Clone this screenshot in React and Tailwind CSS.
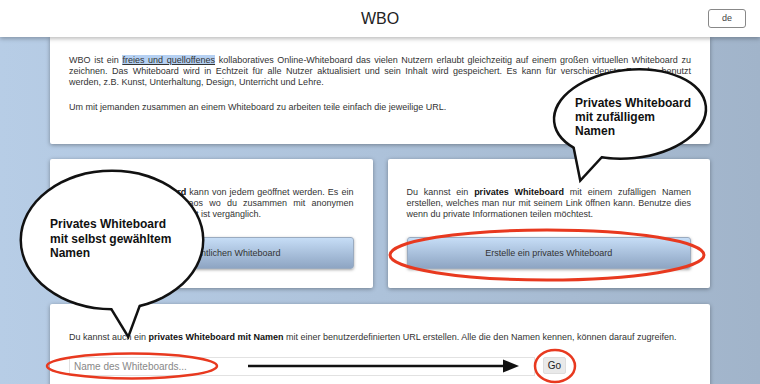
import React from "react";

const line = "block text-justify [text-align-last:justify]";

export default function App() {
  return (
    <div className="relative h-[384px] w-[760px] overflow-hidden bg-gradient-to-r from-[#b7cde6] via-[#adc2da] to-[#a1b4ca] font-['Liberation_Sans',Arial,sans-serif] text-[#333]">
      <header className="relative z-10 grid h-[37px] grid-cols-[1fr_auto_1fr] items-center bg-white shadow-[0_2px_4px_rgba(0,0,0,0.25)]">
        <div />
        <h1 className="text-[16px] leading-none text-[#222]">WBO</h1>
        <div className="flex justify-end pr-[14px]">
          <button className="h-[19px] w-[38px] rounded-[3px] border border-[#888] bg-white text-[9px] text-[#444]">
            de
          </button>
        </div>
      </header>

      <main className="px-[50px] text-[9px] leading-[11px]">
        <section className="h-[107px] rounded-b-[2px] bg-white px-[19px] pt-[18px] shadow-[0_1px_4px_rgba(0,0,0,0.35)]">
          <p>
            <span className={line}>
              WBO ist ein{" "}
              <a className="bg-[#b5d0f2] underline">freies und quelloffenes</a>{" "}
              kollaboratives Online-Whiteboard das vielen Nutzern erlaubt gleichzeitig auf einem großen virtuellen Whiteboard zu
            </span>
            <span className={line}>
              zeichnen. Das Whiteboard wird in Echtzeit für alle Nutzer aktualisiert und sein Inhalt wird gespeichert. Es kann für verschiedenste Zwecke benutzt
            </span>
            <span className="block">werden, z.B. Kunst, Unterhaltung, Design, Unterricht und Lehre.</span>
          </p>
          <p className="mt-[14px]">
            Um mit jemanden zusammen an einem Whiteboard zu arbeiten teile einfach die jeweilige URL.
          </p>
        </section>

        <div className="mt-[15px] grid grid-cols-2 gap-[15px]">
          <Card
            button="Gehe zum öffentlichen Whiteboard"
            lines={[
              <>
                Das <b className="text-[#111]">öffentliche Whiteboard</b> kann von jedem geöffnet werden. Es ein
              </>,
              <>fröhliches und kreatives Chaos wo du zusammen mit anonymen</>,
              <>Nutzern malen kannst. Alles dort ist vergänglich.</>,
            ]}
          />
          <Card
            button="Erstelle ein privates Whiteboard"
            lines={[
              <>
                Du kannst ein <b className="text-[#111]">privates Whiteboard</b> mit einem zufälligen Namen
              </>,
              <>erstellen, welches man nur mit seinem Link öffnen kann. Benutze dies</>,
              <>wenn du private Informationen teilen möchtest.</>,
            ]}
          />
        </div>

        <section className="mt-[16px] h-[100px] rounded-[2px] bg-white px-[19px] pt-[28px] shadow-[0_1px_4px_rgba(0,0,0,0.35)]">
          <p>
            Du kannst auch ein <b className="text-[#111]">privates Whiteboard mit Namen</b> mit einer benutzerdefinierten URL erstellen. Alle die den Namen kennen, können darauf zugreifen.
          </p>
          <div className="mt-[14px] flex items-start gap-[8px]">
            <input
              placeholder="Name des Whiteboards..."
              className="h-[19px] w-[466px] border border-[#e2e2e2] px-[4px] text-[10px] placeholder:text-[#888]"
            />
            <button className="h-[17px] w-[23px] rounded-[2px] border border-[#ddd] bg-[#e9e9e9] text-[10px] text-[#222]">
              Go
            </button>
          </div>
        </section>
      </main>

      <Annotations />
    </div>
  );
}

function Card({ lines, button }) {
  return (
    <section className="h-[129px] rounded-[2px] bg-white px-[19px] pt-[28px] shadow-[0_1px_4px_rgba(0,0,0,0.35)]">
      <p>
        {lines.map((l, i) => (
          <span key={i} className={i < lines.length - 1 ? line : "block"}>
            {l}
          </span>
        ))}
      </p>
      <button className="mt-[17px] h-[32px] w-full rounded-[3px] border border-[#9aabc0] bg-gradient-to-b from-[#c6ddf6] to-[#8ea5c3] text-[9px] text-[#333] shadow-[0_1px_3px_rgba(0,0,0,0.35)]">
        {button}
      </button>
    </section>
  );
}

function Bubble({ cx, cy, rx, ry, tail, rot = 0 }) {
  const pts = tail.map((p) => p.join(",")).join(" ");
  return (
    <g>
      <ellipse cx={cx} cy={cy} rx={rx} ry={ry} transform={`rotate(${rot} ${cx} ${cy})`} fill="white" stroke="#111" strokeWidth="5" />
      <polygon points={pts} fill="white" stroke="#111" strokeWidth="5" strokeLinejoin="miter" />
      <ellipse cx={cx} cy={cy} rx={rx} ry={ry} transform={`rotate(${rot} ${cx} ${cy})`} fill="white" />
      <polygon points={pts} fill="white" />
    </g>
  );
}

function Annotations() {
  const red = "#e8391f";
  return (
    <svg className="pointer-events-none absolute inset-0 z-20" width="760" height="384" viewBox="0 0 760 384">
      <Bubble cx={630} cy={114} rx={75} ry={43} rot={-6} tail={[[574, 143], [581, 178], [604, 153]]} />
      <Bubble cx={112} cy={240} rx={90} ry={68} tail={[[106, 298], [128, 334], [142, 296]]} />

      <g fontFamily="'Liberation Sans', Arial, sans-serif" fontWeight="bold" fontSize="12" fill="#111">
        <text x="575" y="107">Privates Whiteboard</text>
        <text x="575" y="121">mit zufälligem</text>
        <text x="575" y="135">Namen</text>
        <text x="50" y="228">Privates Whiteboard</text>
        <text x="50" y="242.5">mit selbst gewähltem</text>
        <text x="50" y="257">Namen</text>
      </g>

      <ellipse cx="547" cy="255" rx="157" ry="25" fill="none" stroke={red} strokeWidth="3" />
      <ellipse cx="132" cy="366" rx="85" ry="12.5" fill="none" stroke={red} strokeWidth="2.5" />
      <ellipse cx="555" cy="366" rx="20" ry="16" fill="none" stroke={red} strokeWidth="2.5" />

      <line x1="248" y1="366" x2="506" y2="366" stroke="#111" strokeWidth="2.5" />
      <polygon points="503,359.5 519,366 503,372.5" fill="#111" />
    </svg>
  );
}
